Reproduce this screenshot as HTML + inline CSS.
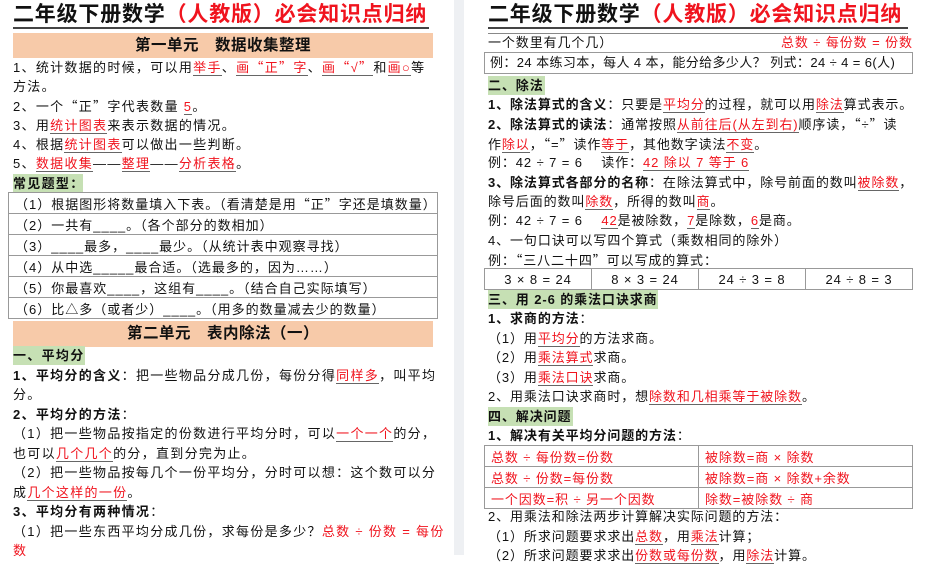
<!DOCTYPE html>
<html><head><meta charset="utf-8"><style>
body{margin:0;width:926px;height:555px;overflow:hidden;background:#fff;position:relative;font-family:"Liberation Sans","Noto Sans CJK SC",sans-serif;color:#111;}
.l{position:absolute;white-space:nowrap;font-size:13px;line-height:19px;letter-spacing:0.9px}
.L .l{letter-spacing:1.3px}
.L table{letter-spacing:1px}
.q{font-family:"Noto Sans CJK SC",sans-serif}
.r{color:#f0141e}
u{text-decoration:none;border-bottom:1px solid #666;color:#f0141e}
b{font-weight:bold}
.t{position:absolute;white-space:nowrap;font-size:21px;font-weight:bold;line-height:26px;letter-spacing:0.8px}
.ul{position:absolute;height:4px;border-top:2px solid #444;border-bottom:1px solid #888}
.band{position:absolute;background:#f7caa9;text-align:center;font-weight:bold;font-size:15.5px;line-height:25px;letter-spacing:0.5px}
.g{background:#c6e0b4;font-weight:bold}
table{position:absolute;border-collapse:collapse;font-size:13px;letter-spacing:0.9px}
td{border:1px solid #999;padding:0 0 0 6px;height:20px;white-space:nowrap}
</style></head><body>
<div style="position:absolute;left:454px;top:0;width:10px;height:555px;background:#eef0f3"></div>
<div class="L">
<div class="t" style="left:13px;top:2px">二年级下册数学<span class="r">（人教版）必会知识点归纳</span></div>
<div class="ul" style="left:13px;top:27px;width:416px"></div>
<div class="band" style="left:13px;top:33px;width:420px;height:25px">第一单元　数据收集整理</div>
<div class="l" style="left:13px;top:57px">1、统计数据的时候，可以用<u>举手</u>、<u>画<span class="q">“</span>正<span class="q">”</span>字</u>、<u>画<span class="q">“</span>√<span class="q">”</span></u>和<u>画○</u>等</div>
<div class="l" style="left:13px;top:77px">方法。</div>
<div class="l" style="left:13px;top:96px">2、一个<span class="q">“</span>正<span class="q">”</span>字代表数量 <u>5</u>。</div>
<div class="l" style="left:13px;top:116px">3、用<u>统计图表</u>来表示数据的情况。</div>
<div class="l" style="left:13px;top:135px">4、根据<u>统计图表</u>可以做出一些判断。</div>
<div class="l" style="left:13px;top:154px">5、<u>数据收集</u>——<u>整理</u>——<u>分析表格</u>。</div>
<div class="l g" style="left:13px;top:174px;width:70px">常见题型：</div>
<table style="left:8px;top:192px;width:430px">
<tr><td>（1）根据图形将数量填入下表。（看清楚是用<span class="q">“</span>正<span class="q">”</span>字还是填数量）</td></tr>
<tr><td>（2）一共有____。（各个部分的数相加）</td></tr>
<tr><td>（3）____最多，____最少。（从统计表中观察寻找）</td></tr>
<tr><td>（4）从中选_____最合适。（选最多的，因为……）</td></tr>
<tr><td>（5）你最喜欢____，这组有____。（结合自己实际填写）</td></tr>
<tr><td>（6）比△多（或者少）____。（用多的数量减去少的数量）</td></tr>
</table>
<div class="band" style="left:13px;top:321px;width:420px;height:26px">第二单元　表内除法（一）</div>
<div class="l g" style="left:13px;top:346px;width:72px">一、平均分</div>
<div class="l" style="left:13px;top:366px"><b>1、平均分的含义</b>：把一些物品分成几份，每份分得<u>同样多</u>，叫平均</div>
<div class="l" style="left:13px;top:385px">分。</div>
<div class="l" style="left:13px;top:405px"><b>2、平均分的方法</b>：</div>
<div class="l" style="left:13px;top:424px">（1）把一些物品按指定的份数进行平均分时，可以<u>一个一个</u>的分，</div>
<div class="l" style="left:13px;top:444px">也可以<u>几个几个</u>的分，直到分完为止。</div>
<div class="l" style="left:13px;top:463px">（2）把一些物品按每几个一份平均分，分时可以想：这个数可以分</div>
<div class="l" style="left:13px;top:483px">成<u>几个这样的一份</u>。</div>
<div class="l" style="left:13px;top:502px"><b>3、平均分有两种情况</b>：</div>
<div class="l" style="left:13px;top:522px">（1）把一些东西平均分成几份，求每份是多少？<span class="r">总数 ÷ 份数 = 每份</span></div>
<div class="l r" style="left:13px;top:541px">数</div>
</div>

<div class="t" style="left:488px;top:2px">二年级下册数学<span class="r">（人教版）必会知识点归纳</span></div>
<div class="ul" style="left:488px;top:27px;width:420px"></div>
<div class="l" style="left:488px;top:33px">一个数里有几个几）</div>
<div class="l r" style="left:781px;top:33px">总数 ÷ 每份数 = 份数</div>
<div style="position:absolute;left:484px;top:52px;width:427px;height:20px;border:1px solid #999"></div>
<div class="l" style="left:490px;top:53px;letter-spacing:0.4px">例：24 本练习本，每人 4 本，能分给多少人？ 列式：24 ÷ 4 = 6(人)</div>
<div class="l g" style="left:488px;top:76px;width:57px">二、除法</div>
<div class="l" style="left:488px;top:95px"><b>1、除法算式的含义</b>：只要是<u>平均分</u>的过程，就可以用<u>除法</u>算式表示。</div>
<div class="l" style="left:488px;top:114px"><b>2、除法算式的读法</b>：通常按照<u>从前往后(从左到右)</u>顺序读，<span class="q">“</span>÷<span class="q">”</span>读</div>
<div class="l" style="left:488px;top:134px">作<u>除以</u>，<span class="q">“</span>=<span class="q">”</span>读作<u>等于</u>，其他数字读法<u>不变</u>。</div>
<div class="l" style="left:488px;top:153px">例：42 ÷ 7 = 6　 读作：<u>42 除以 7 等于 6</u></div>
<div class="l" style="left:488px;top:173px"><b>3、除法算式各部分的名称</b>：在除法算式中，除号前面的数叫<u>被除数</u>，</div>
<div class="l" style="left:488px;top:192px">除号后面的数叫<u>除数</u>，所得的数叫<u>商</u>。</div>
<div class="l" style="left:488px;top:211px">例：42 ÷ 7 = 6　 <u>42</u>是被除数，<u>7</u>是除数，<u>6</u>是商。</div>
<div class="l" style="left:488px;top:231px">4、一句口诀可以写四个算式（乘数相同的除外）</div>
<div class="l" style="left:488px;top:250px">例：<span class="q">“</span>三八二十四<span class="q">”</span>可以写成的算式：</div>
<table style="left:484px;top:268px;width:429px;text-align:center">
<tr><td style="padding:0;width:25%">3 × 8 = 24</td><td style="padding:0;width:25%">8 × 3 = 24</td><td style="padding:0;width:25%">24 ÷ 3 = 8</td><td style="padding:0;width:25%">24 ÷ 8 = 3</td></tr>
</table>
<div class="l g" style="left:488px;top:290px;width:170px">三、用 2-6 的乘法口诀求商</div>
<div class="l" style="left:488px;top:309px"><b>1、求商的方法</b>：</div>
<div class="l" style="left:488px;top:329px">（1）用<u>平均分</u>的方法求商。</div>
<div class="l" style="left:488px;top:348px">（2）用<u>乘法算式</u>求商。</div>
<div class="l" style="left:488px;top:368px">（3）用<u>乘法口诀</u>求商。</div>
<div class="l" style="left:488px;top:387px">2、用乘法口诀求商时，想<u>除数和几相乘等于被除数</u>。</div>
<div class="l g" style="left:488px;top:407px;width:85px">四、解决问题</div>
<div class="l" style="left:488px;top:426px"><b>1、解决有关平均分问题的方法</b>：</div>
<table style="left:484px;top:445px;width:429px" class="r">
<tr><td style="width:50%">总数 ÷ 每份数=份数</td><td>被除数=商 × 除数</td></tr>
<tr><td>总数 ÷ 份数=每份数</td><td>被除数=商 × 除数+余数</td></tr>
<tr><td>一个因数=积 ÷ 另一个因数</td><td>除数=被除数 ÷ 商</td></tr>
</table>
<div class="l" style="left:488px;top:507px">2、用乘法和除法两步计算解决实际问题的方法：</div>
<div class="l" style="left:488px;top:527px">（1）所求问题要求求出<u>总数</u>，用<u>乘法</u>计算；</div>
<div class="l" style="left:488px;top:546px">（2）所求问题要求求出<u>份数或每份数</u>，用<u>除法</u>计算。</div>
</body></html>
